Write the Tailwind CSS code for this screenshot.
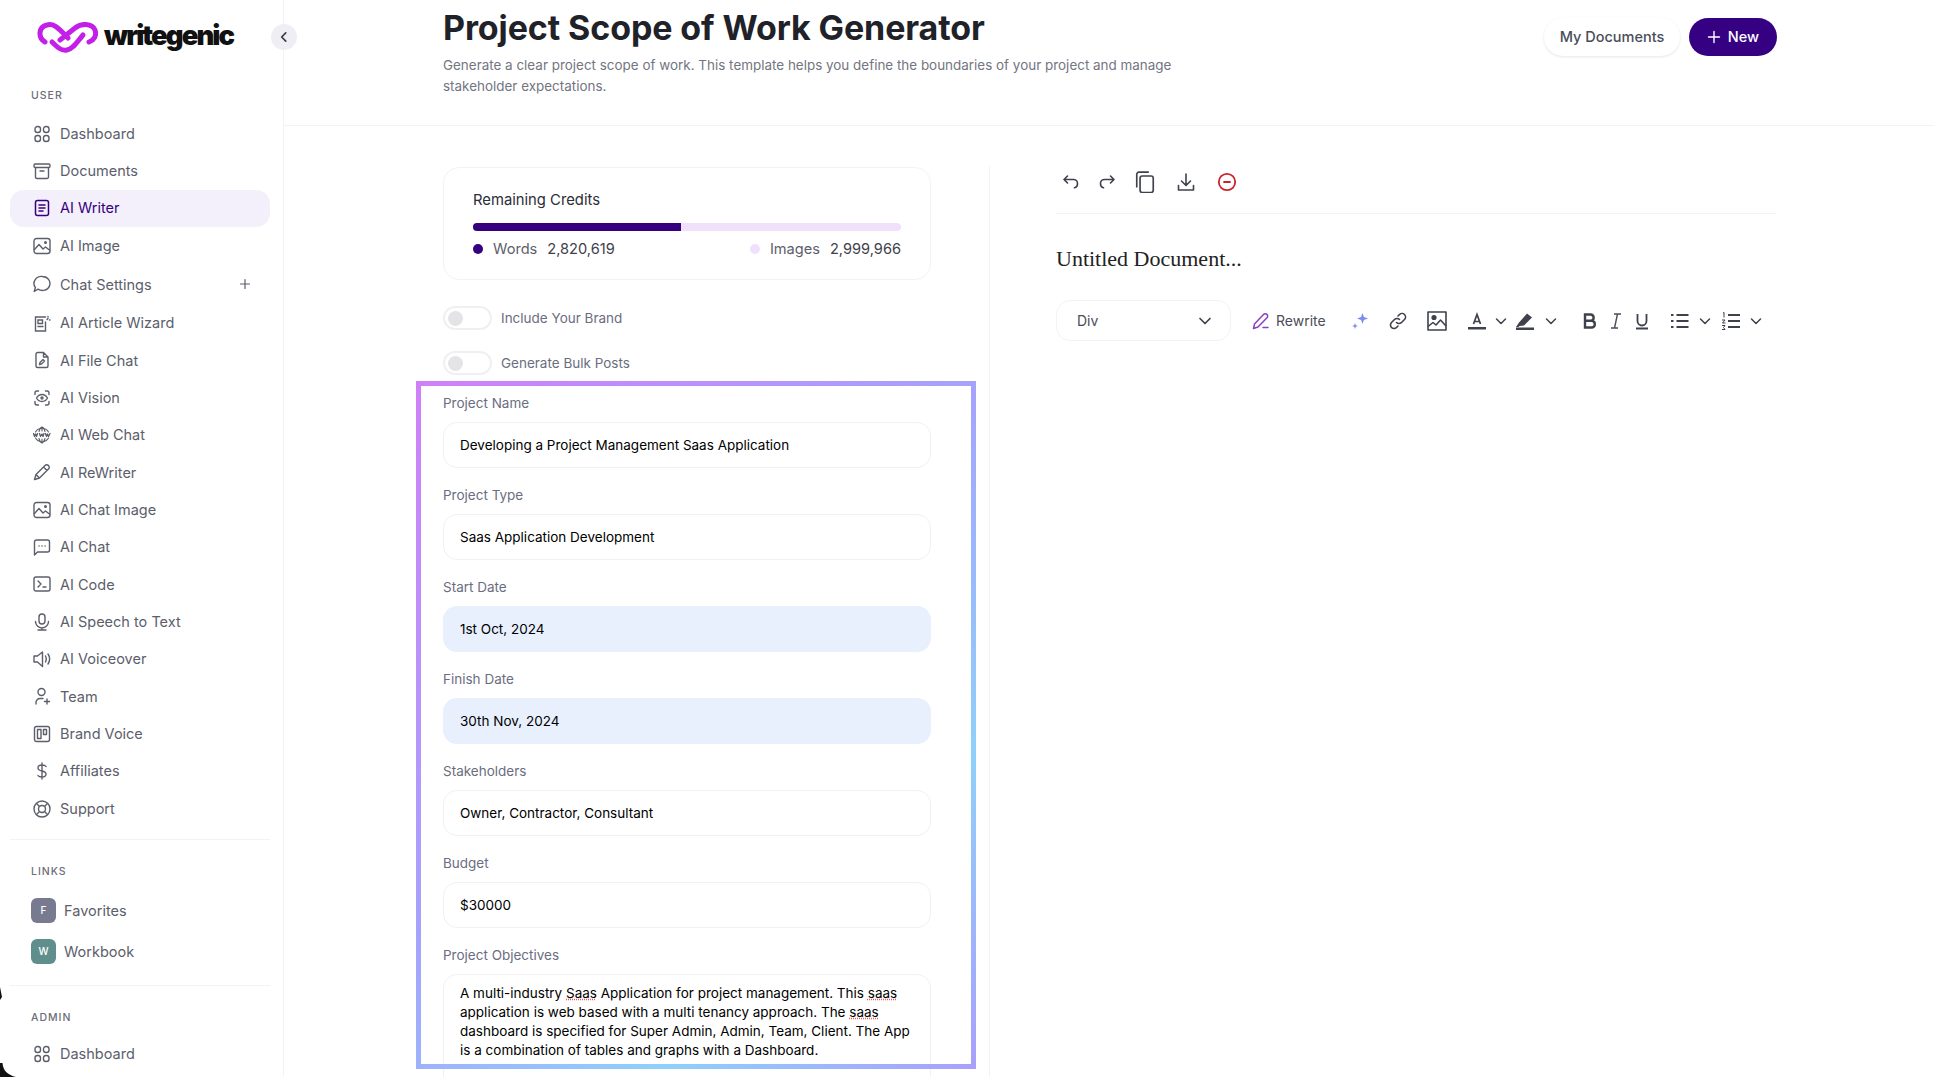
<!DOCTYPE html>
<html lang="en">
<head>
    <meta charset="UTF-8">
    <meta name="viewport" content="width=device-width, initial-scale=1.0">
    <title>Project Scope of Work Generator</title>
    <script src="https://cdn.jsdelivr.net/npm/@tailwindcss/browser@4"></script>
</head>
<body class="bg-white font-['Inter',sans-serif] text-[#1f2228]">
<div class="relative flex h-[1077px] w-[1934px] overflow-hidden">

    <!-- Sidebar -->
    <aside class="relative w-[284px] shrink-0 border-r border-[#f3f3f5] text-[14.5px] text-[#5c5e6b]">
        <div class="flex h-[75px] items-center pl-[37px]">
            <svg class="h-[32px] w-[62px]" viewBox="0 0 62 32" fill="none" stroke="#c41fe8" stroke-width="5" stroke-linecap="round" stroke-linejoin="round">
                <path d="M8 20C1 16 1 5 10 3 17 1 22 7 27 12L31 16"/>
                <path d="M15 20C20 25 24 29 30 28 36 27 40 20 46 13"/>
                <path d="M23 18L38 6C44 1 55 1 58 8 60 14 57 18 52 20"/>
            </svg>
            <span class="-mt-[3px] ml-[5px] text-[27.500px] font-black leading-none tracking-[-1.950px] text-[#111111]">writegenic</span>
        </div>
        <button class="absolute left-[271px] top-[24px] flex h-[26px] w-[26px] items-center justify-center rounded-full bg-[#f0eef5]">
            <svg class="h-[14px] w-[14px]" viewBox="0 0 24 24" fill="none" stroke="#3d3f4a" stroke-width="3" stroke-linecap="round" stroke-linejoin="round"><path d="M15 5l-7 7 7 7"/></svg>
        </button>

        <p class="mt-[15px] pl-[31px] text-[10.5px] font-medium leading-[12px] tracking-[1px] text-[#6b6d78]">USER</p>

        <nav class="mt-[13px] pl-[10px] pr-[13px] [&>a]:flex [&>a]:h-[37.35px] [&>a]:items-center [&>a]:gap-[9px] [&>a]:pl-[23px] [&_svg]:h-[18px] [&_svg]:w-[18px] [&_svg]:shrink-0">
            <a href="#">
                <svg viewBox="0 0 18 18" fill="none" stroke="#5c5e6b" stroke-width="1.400"><rect x="2" y="1.500" width="5.500" height="6" rx="2.500"/><rect x="10.500" y="1.500" width="5.500" height="6" rx="2.500"/><rect x="2" y="10.500" width="5.500" height="6" rx="2.500"/><rect x="10.500" y="10.500" width="5.500" height="6" rx="2.500"/></svg>
                Dashboard</a>
            <a href="#">
                <svg viewBox="0 0 18 18" fill="none" stroke="#5c5e6b" stroke-width="1.400" stroke-linecap="round"><rect x="1" y="2" width="16" height="3.500" rx="1.200"/><path d="M2.500 5.500V15a1.500 1.500 0 0 0 1.500 1.500h10a1.500 1.500 0 0 0 1.500-1.500V5.500M7 9h4"/></svg>
                Documents</a>
            <a href="#" class="rounded-[14px] bg-[#f4f0fb] text-[#36007f]">
                <svg viewBox="0 0 18 18" fill="none" stroke="#36007f" stroke-width="1.500" stroke-linecap="round"><rect x="2.500" y="1.500" width="13" height="15" rx="2"/><path d="M6 6h6M6 9h6M6 12h4"/></svg>
                AI Writer</a>
            <a href="#">
                <svg viewBox="0 0 18 18" fill="none" stroke="#5c5e6b" stroke-width="1.400" stroke-linejoin="round"><rect x="1" y="1.500" width="16" height="15" rx="2.500"/><path d="M1 13l5-5.500 4 4.500 2.500-2 4.500 3.500"/><circle cx="12.500" cy="5.500" r=".8"/></svg>
                AI Image</a>
            <a href="#" class="!h-[40px] pr-[19px]">
                <svg viewBox="0 0 18 18" fill="none" stroke="#5c5e6b" stroke-width="1.400" stroke-linejoin="round"><path d="M9.500 1.500a7.500 7 0 1 1-4.400 12.700L1.200 16.500l1.200-4A7.500 7 0 0 1 9.500 1.500z"/></svg>
                Chat Settings
                <svg class="ml-auto !h-[12px] !w-[12px]" viewBox="0 0 12 12" fill="none" stroke="#5c5e6b" stroke-width="1.200" stroke-linecap="round"><path d="M6 1.500v9M1.500 6h9"/></svg></a>
            <a href="#">
                <svg viewBox="0 0 18 18" fill="none" stroke="#5c5e6b" stroke-width="1.400" stroke-linecap="round"><path d="M12.500 3H2.500v14h10V8M5 6h4.500v3.500H5zM5 12.500h5M15 2.500v.5M16.500 6h.5M14 5.500l1-1"/></svg>
                AI Article Wizard</a>
            <a href="#">
                <svg viewBox="0 0 18 18" fill="none" stroke="#5c5e6b" stroke-width="1.400" stroke-linejoin="round" stroke-linecap="round"><path d="M10.500 1.500H4.500a1.500 1.500 0 0 0-1.500 1.500v12a1.500 1.500 0 0 0 1.500 1.500h9a1.500 1.500 0 0 0 1.500-1.500V6zM10.500 1.500V6H15M6.500 13.500l.5-2 3-3 1.500 1.500-3 3z"/></svg>
                AI File Chat</a>
            <a href="#">
                <svg viewBox="0 0 18 18" fill="none" stroke="#5c5e6b" stroke-width="1.400" stroke-linecap="round" stroke-linejoin="round"><path d="M2 5.500V4a2 2 0 0 1 2-2h1.500M12.500 2H14a2 2 0 0 1 2 2v1.500M2 12.500V14a2 2 0 0 0 2 2h1.500M12.500 16H14a2 2 0 0 0 2-2v-1.500M3.500 9S5.500 5.500 9 5.500 14.500 9 14.500 9 12.500 12.500 9 12.500 3.500 9 3.500 9z"/><circle cx="9" cy="9" r="1"/></svg>
                AI Vision</a>
            <a href="#">
                <svg viewBox="0 0 18 18" fill="none" stroke="#5c5e6b" stroke-width="1.100" stroke-linecap="round" stroke-linejoin="round"><path d="M2.500 6a7.500 7.500 0 0 1 13 0M2.500 12a7.500 7.500 0 0 0 13 0M9 1v4M9 13v4M6 5.500C6.500 3.500 7.500 1.500 9 1c1.500.5 2.500 2.500 3 4.500M6 12.500c.5 2 1.500 4 3 4.500 1.500-.5 2.500-2.500 3-4.500"/><path stroke-width="1.300" d="M.5 7.500l1 3 1-2.500 1 2.500 1-3M6.500 7.500l1 3 1.500-2.500 1 2.500 1-3M12.500 7.500l1 3 1-2.500 1 2.500 1.500-3"/></svg>
                AI Web Chat</a>
            <a href="#">
                <svg viewBox="0 0 18 18" fill="none" stroke="#5c5e6b" stroke-width="1.400" stroke-linecap="round" stroke-linejoin="round"><path d="M1.500 16.500l1.500-5L12 2.500a2.100 2.100 0 0 1 3.500 3.500L6.500 15zM3 11.500L6.500 15M10.500 4l3.500 3.500"/></svg>
                AI ReWriter</a>
            <a href="#">
                <svg viewBox="0 0 18 18" fill="none" stroke="#5c5e6b" stroke-width="1.400" stroke-linejoin="round"><rect x="1" y="1.500" width="16" height="15" rx="2.500"/><path d="M1 13l5-5.500 4 4.500 2.500-2 4.500 3.500"/><circle cx="12.500" cy="5.500" r=".8"/></svg>
                AI Chat Image</a>
            <a href="#">
                <svg viewBox="0 0 18 18" fill="none" stroke="#5c5e6b" stroke-width="1.400" stroke-linecap="round" stroke-linejoin="round"><path d="M1.500 17V4a2 2 0 0 1 2-2h11a2 2 0 0 1 2 2v8a2 2 0 0 1-2 2H4.500zM6 8h.1M9 8h.1M12 8h.1"/></svg>
                AI Chat</a>
            <a href="#">
                <svg viewBox="0 0 18 18" fill="none" stroke="#5c5e6b" stroke-width="1.400" stroke-linecap="round" stroke-linejoin="round"><rect x="1" y="2" width="16" height="14" rx="2"/><path d="M5 6l3 3-3 3M10 12h3"/></svg>
                AI Code</a>
            <a href="#">
                <svg viewBox="0 0 18 18" fill="none" stroke="#5c5e6b" stroke-width="1.400" stroke-linecap="round"><rect x="6" y="1" width="6" height="10" rx="3"/><path d="M2.500 8.500a6.500 6.500 0 0 0 13 0M9 15v2M5 17h8"/></svg>
                AI Speech to Text</a>
            <a href="#">
                <svg viewBox="0 0 18 18" fill="none" stroke="#5c5e6b" stroke-width="1.400" stroke-linecap="round" stroke-linejoin="round"><path d="M9.500 2L4.500 6H1v6h3.500l5 4.500zM12.500 6c1 2 1 4 0 6M15 4c2 3 2 7 0 10"/></svg>
                AI Voiceover</a>
            <a href="#">
                <svg viewBox="0 0 18 18" fill="none" stroke="#5c5e6b" stroke-width="1.400" stroke-linecap="round"><circle cx="8.500" cy="5" r="3.500"/><path d="M3 17v-1.500A4 4 0 0 1 7 11.500h3M14 12v5M11.500 14.500h5"/></svg>
                Team</a>
            <a href="#">
                <svg viewBox="0 0 18 18" fill="none" stroke="#5c5e6b" stroke-width="1.400" stroke-linejoin="round"><rect x="1.500" y="1.500" width="15" height="15" rx="2"/><rect x="4.500" y="4.500" width="3.500" height="9"/><rect x="10.500" y="4.500" width="3" height="5"/></svg>
                Brand Voice</a>
            <a href="#">
                <svg viewBox="0 0 18 18" fill="none" stroke="#5c5e6b" stroke-width="1.400" stroke-linecap="round" stroke-linejoin="round"><path d="M9 1v16M13 4.500C12.500 3.500 11 3 9 3 6.500 3 5 4.300 5 6s1.500 2.500 4 3 4 1.300 4 3-1.500 3-4 3c-2 0-3.500-.5-4-1.500"/></svg>
                Affiliates</a>
            <a href="#">
                <svg viewBox="0 0 18 18" fill="none" stroke="#5c5e6b" stroke-width="1.400"><circle cx="9" cy="9" r="8"/><circle cx="9" cy="9" r="3.500"/><path d="M3.500 3.500l3 3M14.500 3.500l-3 3M3.500 14.500l3-3M14.500 14.500l-3-3"/></svg>
                Support</a>
        </nav>

        <div class="ml-[10px] mr-[13px] mt-[12px] border-t border-[#f3f3f5]"></div>
        <p class="mt-[26px] pl-[31px] text-[10.5px] font-medium leading-[12px] tracking-[1px] text-[#6b6d78]">LINKS</p>
        <div class="mt-[12px] pl-[31px]">
            <a href="#" class="flex h-[41px] items-center gap-[8px]"><span class="flex h-[25px] w-[25px] items-center justify-center rounded-[6px] bg-[#787a90] text-[10px] font-medium text-white">F</span>Favorites</a>
            <a href="#" class="flex h-[41px] items-center gap-[8px]"><span class="flex h-[25px] w-[25px] items-center justify-center rounded-[6px] bg-[#5f8e8d] text-[10px] font-medium text-white">W</span>Workbook</a>
        </div>
        <div class="ml-[10px] mr-[13px] mt-[13px] border-t border-[#f3f3f5]"></div>
        <p class="mt-[26px] pl-[31px] text-[10.5px] font-medium leading-[12px] tracking-[1px] text-[#6b6d78]">ADMIN</p>
        <nav class="mt-[11px] px-[10px]">
            <a href="#" class="flex h-[37.35px] items-center gap-[9px] pl-[23px]">
                <svg class="h-[18px] w-[18px] shrink-0" viewBox="0 0 18 18" fill="none" stroke="#5c5e6b" stroke-width="1.400"><rect x="2" y="1.500" width="5.500" height="6" rx="2.500"/><rect x="10.500" y="1.500" width="5.500" height="6" rx="2.500"/><rect x="2" y="10.500" width="5.500" height="6" rx="2.500"/><rect x="10.500" y="10.500" width="5.500" height="6" rx="2.500"/></svg>
                Dashboard</a>
        </nav>
    </aside>

    <!-- Main -->
    <main class="min-w-0 flex-1">
        <header class="flex h-[126px] items-start justify-between border-b border-[#f3f3f5] pl-[159px] pr-[157px]">
            <div class="w-[760px]">
                <h1 class="mt-[8px] text-[34px] font-bold leading-[40px] tracking-[-0.1px] text-[#1f2228]">Project Scope of Work Generator</h1>
                <p class="mt-[7px] w-[740px] text-[13.44px] leading-[21px] text-[#73757f]">Generate a clear project scope of work. This template helps you define the boundaries of your project and manage stakeholder expectations.</p>
            </div>
            <div class="mt-[18px] flex items-center gap-[9px] text-[14.5px] font-medium">
                <button class="h-[38px] w-[136px] rounded-full bg-white text-[#4b4d59] shadow-[0_1px_3px_rgba(0,0,0,0.1)]">My Documents</button>
                <button class="flex h-[38px] w-[88px] items-center justify-center gap-[7px] rounded-full bg-[#360083] text-white">
                    <svg class="h-[14px] w-[14px]" viewBox="0 0 14 14" fill="none" stroke="#fff" stroke-width="1.400" stroke-linecap="round"><path d="M7 1.500v11M1.500 7h11"/></svg>New</button>
            </div>
        </header>

        <div class="flex pl-[159px]">
            <!-- Form column -->
            <section class="relative w-[488px] shrink-0 pt-[41px] text-[13.5px]">
                <div class="h-[113px] rounded-[16px] border border-[#f3f3f5] px-[29px] pt-[22px]">
                    <p class="text-[14.8px] leading-[20px] text-[#2b2d38]">Remaining Credits</p>
                    <div class="mt-[13px] flex h-[8px] overflow-hidden rounded-full bg-[#f0e0fb]"><div class="h-full w-[208px] bg-[#36007f]"></div></div>
                    <div class="mt-[8px] flex items-center justify-between text-[14.6px] leading-[20px]">
                        <div class="flex items-center"><span class="h-[10px] w-[10px] rounded-full bg-[#36007f]"></span><span class="ml-[10px] text-[#5c5e6b]">Words</span><span class="ml-[10px] text-[#3f414c]">2,820,619</span></div>
                        <div class="flex items-center"><span class="h-[10px] w-[10px] rounded-full bg-[#f0e0fb]"></span><span class="ml-[10px] text-[#5c5e6b]">Images</span><span class="ml-[10px] text-[#3f414c]">2,999,966</span></div>
                    </div>
                </div>

                <label class="mt-[26px] flex h-[24px] items-center gap-[9px] text-[#6b6d80]">
                    <span class="flex h-[24px] w-[49px] items-center rounded-full border-2 border-[#f0f0f1] pl-[3px]"><span class="h-[15px] w-[15px] rounded-full bg-[#e4e4e6]"></span></span>Include Your Brand</label>
                <label class="mt-[21px] flex h-[24px] items-center gap-[9px] text-[#6b6d80]">
                    <span class="flex h-[24px] w-[49px] items-center rounded-full border-2 border-[#f0f0f1] pl-[3px]"><span class="h-[15px] w-[15px] rounded-full bg-[#e4e4e6]"></span></span>Generate Bulk Posts</label>

                <div class="mt-[18px] flex flex-col [&_label]:block [&_label]:leading-[20px] [&_label]:text-[#6b6d80]">
                    <div class="h-[92px]"><label>Project Name</label>
                        <div class="mt-[9px] flex h-[46px] items-center rounded-[14px] border border-[#f1f1f3] px-[16px] text-black">Developing a Project Management Saas Application</div></div>
                    <div class="h-[92px]"><label>Project Type</label>
                        <div class="mt-[9px] flex h-[46px] items-center rounded-[14px] border border-[#f1f1f3] px-[16px] text-black">Saas Application Development</div></div>
                    <div class="h-[92px]"><label>Start Date</label>
                        <div class="mt-[9px] flex h-[46px] items-center rounded-[14px] bg-[#e8f0fe] px-[17px] text-black">1st Oct, 2024</div></div>
                    <div class="h-[92px]"><label>Finish Date</label>
                        <div class="mt-[9px] flex h-[46px] items-center rounded-[14px] bg-[#e8f0fe] px-[17px] text-black">30th Nov, 2024</div></div>
                    <div class="h-[92px]"><label>Stakeholders</label>
                        <div class="mt-[9px] flex h-[46px] items-center rounded-[14px] border border-[#f1f1f3] px-[16px] text-black">Owner, Contractor, Consultant</div></div>
                    <div class="h-[92px]"><label>Budget</label>
                        <div class="mt-[9px] flex h-[46px] items-center rounded-[14px] border border-[#f1f1f3] px-[16px] text-black">$30000</div></div>
                    <div><label>Project Objectives</label>
                        <div class="mt-[9px] h-[140px] rounded-[14px] border border-[#f1f1f3] px-[16px] pt-[9px] leading-[19.1px] text-black">A multi-industry <span class="underline decoration-dotted decoration-[#e06060]">Saas</span> Application for project management. This <span class="underline decoration-dotted decoration-[#e06060]">saas</span> application is web based with a multi tenancy approach. The <span class="underline decoration-dotted decoration-[#e06060]">saas</span> dashboard is specified for Super Admin, Admin, Team, Client. The App is a combination of tables and graphs with a Dashboard.</div></div>
                </div>

                <!-- highlight frame over the form fields -->
                <div class="pointer-events-none absolute left-[-27px] top-[255px] h-[688px] w-[560px] border-[5px] [border-image:linear-gradient(135deg,#cf80f8,#a5a3fc_45%,#8fd0fb_75%,#a9a0fb)_1]"></div>
            </section>

            <!-- Editor column -->
            <section class="ml-[58px] mt-[40px] h-[911px] w-[788px] border-l border-[#f3f3f5] pl-[66px] pr-[1px]">
                <div class="flex h-[32px] items-center text-[#3f414c] [&_svg]:h-[20px] [&_svg]:w-[20px]">
                    <svg class="ml-[5px]" viewBox="0 0 20 20" fill="none" stroke="currentColor" stroke-width="1.600" stroke-linecap="round" stroke-linejoin="round"><path d="M6.500 4L3 7.500 6.500 11M3 7.500h9.500a4 4 0 0 1 4 4v.5a4 4 0 0 1-3 3.800"/></svg>
                    <svg class="ml-[16px]" viewBox="0 0 20 20" fill="none" stroke="currentColor" stroke-width="1.600" stroke-linecap="round" stroke-linejoin="round"><path d="M13.500 4L17 7.500 13.500 11M17 7.500H7.500a4 4 0 0 0-4 4v.5a4 4 0 0 0 3 3.800"/></svg>
                    <svg class="ml-[17px] !h-[22px] !w-[22px]" viewBox="0 0 20 20" fill="none" stroke="currentColor" stroke-width="1.500" stroke-linejoin="round"><rect x="5.500" y="4.500" width="12" height="15" rx="2"/><path d="M2.500 15V3a2 2 0 0 1 2-2h9"/></svg>
                    <svg class="ml-[20px]" viewBox="0 0 20 20" fill="none" stroke="currentColor" stroke-width="1.600" stroke-linecap="round" stroke-linejoin="round"><path d="M10 2v11M5.500 9l4.500 4.500L14.500 9M2.500 13.500V18h15v-4.500"/></svg>
                    <svg class="ml-[21px]" viewBox="0 0 20 20" fill="none" stroke="#c9252d" stroke-width="1.800" stroke-linecap="round"><circle cx="10" cy="10" r="8.200"/><path d="M7 10h6"/></svg>
                </div>
                <div class="mt-[15px] border-t border-[#f3f3f5]"></div>
                <p class="mt-[32px] font-['Liberation_Serif',serif] text-[22px] leading-[26px] text-[#222222]">Untitled Document...</p>

                <div class="mt-[28px] flex h-[41px] items-center text-[#3f414c]">
                    <div class="flex h-[41px] w-[175px] items-center justify-between rounded-[14px] border border-[#f3f3f5] pl-[20px] pr-[18px] text-[14px] text-[#4b4d59]">Div
                        <svg class="h-[14px] w-[14px]" viewBox="0 0 14 14" fill="none" stroke="#3f414c" stroke-width="1.700" stroke-linecap="round" stroke-linejoin="round"><path d="M2 4.500l5 5 5-5"/></svg></div>
                    <svg class="ml-[21px] h-[18px] w-[18px]" viewBox="0 0 18 18" fill="none" stroke="#8a3fc4" stroke-width="1.500" stroke-linecap="round" stroke-linejoin="round"><path d="M1.500 16.500l1-4.500L11.500 2.500a2.300 2.300 0 0 1 3.500 3.300L6 15zM11 15.500h5"/></svg>
                    <span class="ml-[6px] text-[14px] text-[#4b4d59]">Rewrite</span>
                    <svg class="ml-[24px] h-[20px] w-[20px]" viewBox="0 0 20 20" fill="#7b8bee"><path d="M12.500 2l1.400 4.100L18 7.500l-4.100 1.400L12.500 13l-1.400-4.100L7 7.500l4.100-1.400zM5 12l.8 2.200L8 15l-2.200.8L5 18l-.8-2.200L2 15l2.200-.8z"/></svg>
                    <svg class="ml-[18px] h-[20px] w-[20px]" viewBox="0 0 20 20" fill="none" stroke="#3f414c" stroke-width="1.600" stroke-linecap="round"><path d="M8.500 11.500a3.500 3.500 0 0 0 5 0l3-3a3.500 3.500 0 0 0-5-5L10 5M11.500 8.500a3.500 3.500 0 0 0-5 0l-3 3a3.500 3.500 0 0 0 5 5L10 15"/></svg>
                    <svg class="ml-[19px] h-[20px] w-[20px]" viewBox="0 0 20 20" fill="none" stroke="#3f414c" stroke-width="1.600" stroke-linejoin="round"><rect x="1" y="1" width="18" height="18"/><circle cx="7" cy="6.500" r="1.800" fill="#3f414c"/><path d="M1 15.500l5-4 3 2.500 4.500-5 5.500 6"/></svg>
                    <svg class="ml-[20px] h-[20px] w-[20px]" viewBox="0 0 20 20"><path fill="none" stroke="#3f414c" stroke-width="1.700" d="M6.500 13L10 3.500 13.500 13M7.500 10.500h5"/><rect x="1" y="16" width="18" height="2.500" fill="#3f414c"/></svg>
                    <svg class="ml-[7px] h-[14px] w-[14px]" viewBox="0 0 14 14" fill="none" stroke="#3f414c" stroke-width="1.500" stroke-linecap="round" stroke-linejoin="round"><path d="M2.500 5l4.500 4.500L11.500 5"/></svg>
                    <svg class="ml-[7px] h-[20px] w-[20px]" viewBox="0 0 20 20" fill="#3f414c"><path d="M1 16l3-4.500L12 2.500 17 6.500 9 14.500 4.500 15l-1 1zM1 16.500h18V19H1z"/></svg>
                    <svg class="ml-[9px] h-[14px] w-[14px]" viewBox="0 0 14 14" fill="none" stroke="#3f414c" stroke-width="1.500" stroke-linecap="round" stroke-linejoin="round"><path d="M2.500 5l4.500 4.500L11.500 5"/></svg>
                    <svg class="ml-[22px] h-[20px] w-[20px]" viewBox="0 0 20 20" fill="none" stroke="#3f414c" stroke-width="2.400"><path d="M5 3.500h6a3.200 3.200 0 0 1 0 6.300H5zM5 9.800h7a3.400 3.400 0 0 1 0 6.700H5z"/></svg>
                    <svg class="ml-[6px] h-[20px] w-[20px]" viewBox="0 0 20 20" fill="none" stroke="#4b4d59" stroke-width="1.400"><path d="M8 3h7M5 17h7M11.500 3l-3 14"/></svg>
                    <svg class="ml-[6px] h-[20px] w-[20px]" viewBox="0 0 20 20" fill="none" stroke="#3f414c" stroke-width="1.800"><path d="M5.500 3v7a4.500 4.500 0 0 0 9 0V3M4 17.500h12"/></svg>
                    <svg class="ml-[18px] h-[20px] w-[20px]" viewBox="0 0 20 20" fill="none" stroke="#3f414c" stroke-width="2"><path d="M6.500 4h12M6.500 10h12M6.500 16h12M1 4h2.500M1 10h2.500M1 16h2.500"/></svg>
                    <svg class="ml-[8px] h-[14px] w-[14px]" viewBox="0 0 14 14" fill="none" stroke="#3f414c" stroke-width="1.500" stroke-linecap="round" stroke-linejoin="round"><path d="M2.500 5l4.500 4.500L11.500 5"/></svg>
                    <svg class="ml-[9px] h-[20px] w-[20px]" viewBox="0 0 20 20" fill="none" stroke="#3f414c" stroke-width="2"><path d="M7 4h12M7 10h12M7 16h12"/><path stroke-width="1" d="M2 2l1-.5v5M1 9h3L1.500 12h3M1 14.500h3l-1.500 2 1.500 2H1"/></svg>
                    <svg class="ml-[8px] h-[14px] w-[14px]" viewBox="0 0 14 14" fill="none" stroke="#3f414c" stroke-width="1.500" stroke-linecap="round" stroke-linejoin="round"><path d="M2.500 5l4.500 4.500L11.500 5"/></svg>
                </div>
            </section>
        </div>
    </main>

    <!-- window corner showing at the bottom left -->
    <svg class="absolute bottom-0 left-0 h-[90px] w-[18px]" viewBox="0 0 18 90" fill="#111"><path d="M0 0L2 10 0 13zM0 76h2.500C3 84 8 88 16 90H0z"/></svg>
</div>
</body>
</html>
